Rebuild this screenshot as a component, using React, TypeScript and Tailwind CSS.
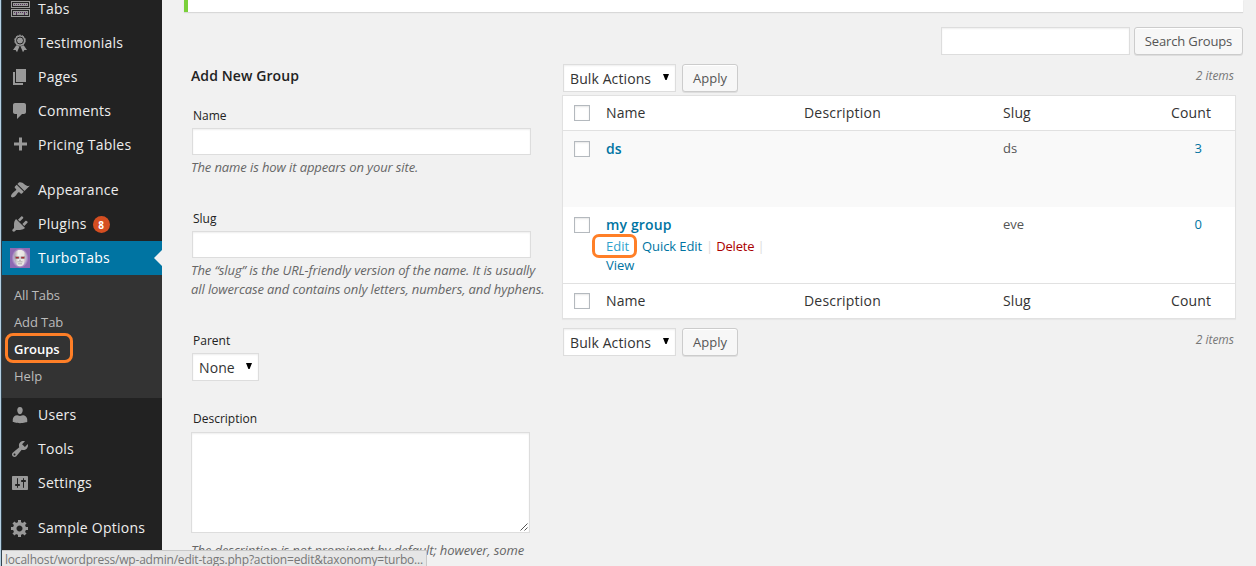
import React from "react";

const paths = {
  page: "M6 15V2h10v13H6zm-1 1h8v2H3V5h2v11z",
  comments:
    "M5 2h9c1.100 0 2 .9 2 2v7c0 1.100-.9 2-2 2h-2l-5 5v-5H5c-1.100 0-2-.9-2-2V4c0-1.100.9-2 2-2z",
  plus: "M17 7.500v3h-5v5H9v-5H4v-3h5v-5h3v5h5z",
  appearance:
    "M14.48 11.06L7.41 3.99l1.5-1.5c.5-.56 2.3-.47 3.51.32 1.21.8 1.43 1.28 2.91 2.1 1.18.64 2.45 1.26 4.45.85zm-.71.71L6.7 4.7 4.93 6.47c-.39.39-.39 1.02 0 1.41l1.06 1.06c.39.39.39 1.03 0 1.42-.6.6-1.43 1.11-2.21 1.69-.35.26-.7.53-1.01.84C1.43 14.23.4 16.08 1.4 17.07c.99 1 2.84-.03 4.18-1.36.31-.31.58-.66.85-1.02.57-.78 1.08-1.61 1.69-2.21.39-.39 1.02-.39 1.41 0l1.06 1.06c.39.39 1.02.39 1.41 0z",
  plugins:
    "M13.11 4.36L9.87 7.6 8 5.73l3.24-3.24c.35-.34 1.05-.2 1.56.32.52.51.66 1.21.31 1.55zm-8 1.77l.91-1.12 9.01 9.01-1.19.84c-.71.71-2.63 1.16-3.82 1.16H6.14L4.9 17.26c-.59.59-1.54.59-2.12 0-.59-.58-.59-1.53 0-2.12l1.24-1.24v-3.88c0-1.13.4-3.19 1.09-3.89zm7.26 3.97l3.24-3.24c.34-.35 1.04-.21 1.55.31.52.51.66 1.21.31 1.55l-3.24 3.25z",
  users:
    "M10 9.250c-2.270 0-2.730-3.440-2.730-3.440C7 4.020 7.820 2 9.970 2c2.160 0 2.980 2.020 2.710 3.810 0 0-.41 3.440-2.680 3.440zM7.230 10.200L10 11l2.720-.8c2.390 0 4.520 2.130 4.520 4.330v2.490s-3.650 1.130-7.240 1.130c-3.650 0-7.240-1.130-7.240-1.130v-2.490c0-2.250 1.940-4.330 4.470-4.330z",
  tools:
    "M16.68 9.77c-1.34 1.34-3.3 1.67-4.95.99l-5.41 6.52c-.99.99-2.59.99-3.58 0s-.99-2.59 0-3.57l6.52-5.42c-.68-1.65-.35-3.61.99-4.95 1.28-1.28 3.12-1.62 4.72-1.06l-2.89 2.89 2.82 2.82 2.86-2.87c.53 1.58.18 3.39-1.08 4.65zM3.81 16.21c.4.39 1.04.39 1.43 0 .4-.4.4-1.04 0-1.43-.39-.4-1.03-.4-1.43 0-.39.39-.39 1.03 0 1.43z",
  settings:
    "M18 16V4c0-.55-.45-1-1-1H3c-.55 0-1 .45-1 1v12c0 .55.45 1 1 1h14c.55 0 1-.45 1-1zM8 11h1c.55 0 1 .45 1 1s-.45 1-1 1H8v1.5c0 .28-.22.5-.5.5s-.5-.22-.5-.5V13H6c-.55 0-1-.45-1-1s.45-1 1-1h1V5.5c0-.28.22-.5.5-.5s.5.22.5.5V11zm5-2h-1c-.55 0-1-.45-1-1s.45-1 1-1h1V5.5c0-.28.22-.5.5-.5s.5.22.5.5V7h1c.55 0 1 .45 1 1s-.45 1-1 1h-1v5.5c0 .28-.22.5-.5.5s-.5-.22-.5-.5V9z",
  generic:
    "M18 12h-2.18c-.17.7-.44 1.35-.81 1.93l1.54 1.54-2.1 2.1-1.54-1.54c-.58.36-1.23.63-1.91.79V19H8v-2.18c-.68-.16-1.33-.43-1.91-.79l-1.54 1.54-2.12-2.12 1.54-1.54c-.36-.58-.63-1.23-.79-1.91H1V9.03h2.17c.16-.7.44-1.35.8-1.94L2.43 5.55l2.1-2.1 1.54 1.54c.58-.37 1.24-.64 1.93-.81V2h3v2.18c.68.16 1.33.43 1.91.79l1.54-1.54 2.12 2.12-1.54 1.54c.36.59.64 1.24.8 1.94H18V12zm-8.5 1.5c1.66 0 3-1.34 3-3s-1.34-3-3-3-3 1.34-3 3 1.34 3 3 3z",
};

function Glyph({ name }: { name: keyof typeof paths }) {
  return (
    <svg viewBox="0 0 20 20" className="size-5 fill-[#999]">
      <path d={paths[name]} />
    </svg>
  );
}

function AwardGlyph() {
  return (
    <svg viewBox="0 0 20 20" className="size-5">
      <path fill="#999" d="M6.300 12.200l3.200 1.300L7 19.200 5.600 17H3zM13.700 12.200l-3.200 1.300 2.500 5.700 1.400-2.200H17z" />
      <circle cx="10" cy="7.500" r="5.300" fill="#999" stroke="#999" strokeWidth="1" strokeDasharray="2.100 1.200" />
      <circle cx="10" cy="7.500" r="3.500" fill="#999" stroke="#222" strokeWidth="1" />
    </svg>
  );
}

function TabsGlyph() {
  return (
    <svg viewBox="0 0 20 20" className="size-5" shapeRendering="crispEdges">
      <path fill="#999" d="M1 2h19v7H1zM1 10h19v8H1z" />
      <path fill="#222" d="M2 3h17v5H2zM2 11h17v6H2z" />
      <path fill="#999" d="M3 4h15v3H3zM3 12h15v4H3z" />
      <path stroke="#54325c" strokeWidth="1" strokeDasharray="1 1" d="M4 5.500h13M4 13.500h13" />
      <path fill="#54325c" d="M6 14h1v2H6zM14 14h1v2h-1z" />
    </svg>
  );
}

function SkullGlyph() {
  return (
    <svg viewBox="0 0 20 20" className="size-5">
      <defs>
        <radialGradient id="halo">
          <stop offset="0.6" stopColor="#d8cbe2" />
          <stop offset="1" stopColor="#8f69b2" />
        </radialGradient>
        <linearGradient id="bone">
          <stop offset="0" stopColor="#a09aa2" />
          <stop offset="0.35" stopColor="#efedeb" />
          <stop offset="0.8" stopColor="#e6e3e1" />
          <stop offset="1" stopColor="#b8b2b6" />
        </linearGradient>
      </defs>
      <path fill="#8f69b2" d="M0 0h20v20H0z" />
      <ellipse cx="10" cy="10" rx="8.500" ry="10" fill="url(#halo)" />
      <path fill="url(#bone)" d="M10 2c3.800 0 5.800 2.800 5.800 6.500 0 2.600-.7 4.200-1.300 5.500-.5 2.900-2 4.300-4.500 4.300s-4-1.400-4.500-4.300c-.6-1.300-1.300-2.900-1.300-5.500C4.200 4.800 6.200 2 10 2z" />
      <path fill="#8b7478" d="M5 8.500h4.300v2.300H5.400zM10.700 8.500H15l-.4 2.300h-3.900z" />
      <path fill="#ae2c34" d="M6 9h2.500v1.200H6zM11.500 9H14v1.200h-2.500z" />
      <path fill="#9a9494" d="M9.300 11.700h1.400v1H9.300zM7.500 13.500h5v.8h-5zM8 15.500h4v.7H8z" />
    </svg>
  );
}

function MenuItem({
  icon,
  label,
  badge,
  active,
}: {
  icon: React.ReactNode;
  label: string;
  badge?: string;
  active?: boolean;
}) {
  return (
    <div
      className={
        active
          ? "relative flex h-[34px] items-center bg-[#0074a2] text-white"
          : "flex h-[34px] items-center text-[#eee]"
      }
    >
      <span className="flex w-9 shrink-0 justify-center">{icon}</span>
      <span className="text-[14px] leading-[18px] tracking-[0.25px]">{label}</span>
      {badge && (
        <span className="ml-[6px] mt-px flex size-[17px] items-center justify-center rounded-full bg-[#d54e21] text-[10px] font-bold leading-none text-white">
          {badge}
        </span>
      )}
      {active && (
        <span className="absolute right-0 top-[9px] size-0 border-y-8 border-r-8 border-y-transparent border-r-[#f1f1f1]" />
      )}
    </div>
  );
}

function Sidebar() {
  return (
    <nav className="-mt-2 w-40 shrink-0 bg-[#222]">
      <MenuItem icon={<TabsGlyph />} label="Tabs" />
      <MenuItem icon={<AwardGlyph />} label="Testimonials" />
      <MenuItem icon={<Glyph name="page" />} label="Pages" />
      <MenuItem icon={<Glyph name="comments" />} label="Comments" />
      <MenuItem icon={<Glyph name="plus" />} label="Pricing Tables" />
      <div className="h-[11px]" />
      <MenuItem icon={<Glyph name="appearance" />} label="Appearance" />
      <MenuItem icon={<Glyph name="plugins" />} label="Plugins" badge="8" />
      <MenuItem icon={<SkullGlyph />} label="TurboTabs" active />
      <div className="h-[123px] bg-[#333] pt-[7px] text-[13px] text-[#bbb]">
        <div className="flex h-[27px] items-center pl-3 tracking-[-0.1px]">All Tabs</div>
        <div className="flex h-[27px] items-center pl-3 tracking-[-0.1px]">Add Tab</div>
        <div className="relative flex h-[27px] items-center pl-3 font-semibold text-white">
          Groups
          <span className="absolute -top-[3px] left-[3px] h-[30px] w-[68px] rounded-[8px] border-[3px] border-[#ff7f27]" />
        </div>
        <div className="flex h-[27px] items-center pl-3">Help</div>
      </div>
      <MenuItem icon={<Glyph name="users" />} label="Users" />
      <MenuItem icon={<Glyph name="tools" />} label="Tools" />
      <MenuItem icon={<Glyph name="settings" />} label="Settings" />
      <div className="h-[11px]" />
      <MenuItem icon={<Glyph name="generic" />} label="Sample Options" />
    </nav>
  );
}

const field = "border border-[#ddd] bg-white shadow-[inset_0_1px_2px_rgba(0,0,0,0.07)]";

function Select({ label, className }: { label: string; className: string }) {
  return (
    <div className={`${field} ${className} flex h-7 items-center justify-between px-[6px] text-[14px] text-[#333]`}>
      <span className="tracking-[0.1px]">{label}</span>
      <svg viewBox="0 0 6 6" className="mb-[2px] h-[6px] w-[6px]">
        <path d="M0 0h6L3.600 6H2.400z" />
      </svg>
    </div>
  );
}

function Button({ label, className }: { label: string; className: string }) {
  return (
    <button
      className={`${className} h-7 whitespace-nowrap rounded-[3px] border border-[#ccc] bg-[#f7f7f7] pt-px text-[13px] text-[#555] shadow-[inset_0_1px_0_#fff,0_1px_0_rgba(0,0,0,0.08)]`}
    >
      {label}
    </button>
  );
}

function Checkbox() {
  return (
    <span className="ml-[11px] block size-4 border border-[#b4b9be] bg-white shadow-[inset_0_1px_2px_rgba(0,0,0,0.1)]" />
  );
}

function AddForm() {
  const hint = "whitespace-nowrap text-[13px] italic leading-[19px] tracking-[-0.1px] text-[#666]";
  const label = "pl-[2px] text-[12px] leading-[18px] text-[#222]";
  return (
    <section className="w-[382px] shrink-0 pl-[11px]">
      <h3 className="mt-[2px] text-[14px] font-semibold leading-[19px] tracking-[0.1px] text-[#222]">
        Add New Group
      </h3>
      <div className={`${label} mt-[22px]`}>Name</div>
      <div className={`${field} ml-px mt-[3px] h-[27px] w-[339px]`} />
      <p className={`${hint} mt-[3px]`}>The name is how it appears on your site.</p>
      <div className={`${label} mt-[33px]`}>Slug</div>
      <div className={`${field} ml-px mt-[3px] h-[27px] w-[339px]`} />
      <p className={`${hint} mt-[3px]`}>
        The “slug” is the URL-friendly version of the name. It is usually
        <br />
        all lowercase and contains only letters, numbers, and hyphens.
      </p>
      <div className={`${label} mt-[33px]`}>Parent</div>
      <Select label="None" className="ml-px mt-[3px] w-[67px]" />
      <div className={`${label} mt-[29px]`}>Description</div>
      <div className={`${field} mt-1 flex h-[101px] w-[339px] items-end justify-end p-px`}>
        <svg viewBox="0 0 8 8" className="size-2" stroke="#555" strokeWidth="1">
          <path d="M.5 7.500l7-7M4.500 7.500l3-3" />
        </svg>
      </div>
      <p className={`${hint} mt-2`}>The description is not prominent by default; however, some</p>
    </section>
  );
}

function BulkBar() {
  return (
    <div className="flex h-7 items-start">
      <Select label="Bulk Actions" className="ml-px w-[113px]" />
      <Button label="Apply" className="ml-[6px] w-14" />
      <span className="ml-auto mr-[2px] mt-[3px] text-[12px] italic leading-[18px] text-[#777]">2 items</span>
    </div>
  );
}

const columns = "grid grid-cols-[43px_198px_199px_137px_1fr]";

function HeaderRow({ className }: { className: string }) {
  return (
    <div className={`${columns} ${className} h-[35px] items-center text-[14px] leading-[19px] text-[#333]`}>
      <Checkbox />
      <span className="pb-[2px] tracking-[0.1px]">Name</span>
      <span className="pb-[2px] tracking-[0.2px]">Description</span>
      <span className="pb-[2px] tracking-[0.1px]">Slug</span>
      <span className="pb-[2px] pr-6 text-right tracking-[0.1px]">Count</span>
    </div>
  );
}

function GroupTable() {
  return (
    <div className="mt-[3px] w-[674px] border border-[#e1e1e1] bg-white shadow-[0_1px_1px_rgba(0,0,0,0.04)]">
      <HeaderRow className="border-b border-[#e1e1e1]" />
      <div className={`${columns} h-[76px] bg-[#f9f9f9] pt-[8px] text-[13px] leading-[19px] text-[#555]`}>
        <div className="pt-[2px]"><Checkbox /></div>
        <span className="text-[14px] font-semibold text-[#0074a2]">ds</span>
        <span />
        <span>ds</span>
        <span className="pr-[33px] text-right text-[#0074a2]">3</span>
      </div>
      <div className={`${columns} h-[76px] pt-[8px] text-[13px] leading-[19px] text-[#555]`}>
        <div className="pt-[2px]"><Checkbox /></div>
        <div className="whitespace-nowrap text-[#0074a2]">
          <div className="text-[14px] font-semibold tracking-[0.15px]">my group</div>
          <div className="mt-[3px]">
            <span className="relative text-[#2ea2cc]">
              Edit
              <span className="absolute -left-[14px] -top-[3px] h-6 w-[45px] rounded-[7px] border-[3px] border-[#ff7f27]" />
            </span>
            <span className="ml-[13px] tracking-[-0.1px]">Quick Edit</span>
            <span className="pl-[4px] pr-[3px] text-[#ddd]">|</span>
            <span className="tracking-[-0.15px] text-[#a00]">Delete</span>
            <span className="pl-[3px] text-[#ddd]">|</span>
            <br />
            View
          </div>
        </div>
        <span />
        <span>eve</span>
        <span className="pr-[33px] text-right text-[#0074a2]">0</span>
      </div>
      <HeaderRow className="border-t border-[#e1e1e1]" />
    </div>
  );
}

export default function App() {
  return (
    <div
      className="relative flex h-[566px] w-[1256px] overflow-hidden bg-[#f1f1f1]"
      style={{ fontFamily: '"Open Sans", sans-serif' }}
    >
      <div className="w-[2px] shrink-0 border-r border-[#33434e] bg-[#b4cfe2]" />
      <Sidebar />
      <main className="flex min-w-0 flex-1 flex-col">
        <div className="ml-[22px] mr-[13px] h-3 shrink-0 border-l-4 border-[#7ad03a] bg-white shadow-[0_1px_1px_rgba(0,0,0,0.1)]" />
        <div className="mr-[13px] mt-[15px] flex shrink-0 justify-end gap-1">
          <div className={`${field} h-7 w-[189px]`} />
          <Button label="Search Groups" className="w-[109px] tracking-[-0.15px]" />
        </div>
        <div className="ml-[18px] mt-[9px] flex">
          <AddForm />
          <section className="w-[674px] shrink-0">
            <BulkBar />
            <GroupTable />
            <div className="h-[9px]" />
            <BulkBar />
          </section>
        </div>
      </main>
      <div className="absolute bottom-0 left-[2px] h-4 w-[425px] overflow-hidden whitespace-nowrap border-r border-t border-[#c8c8c8] bg-[#e6e6e6] pl-[3px] text-[12px] leading-[18px] tracking-[-0.2px] text-[#777]">
        localhost/wordpress/wp-admin/edit-tags.php?action=edit&amp;taxonomy=turbo...
      </div>
    </div>
  );
}
